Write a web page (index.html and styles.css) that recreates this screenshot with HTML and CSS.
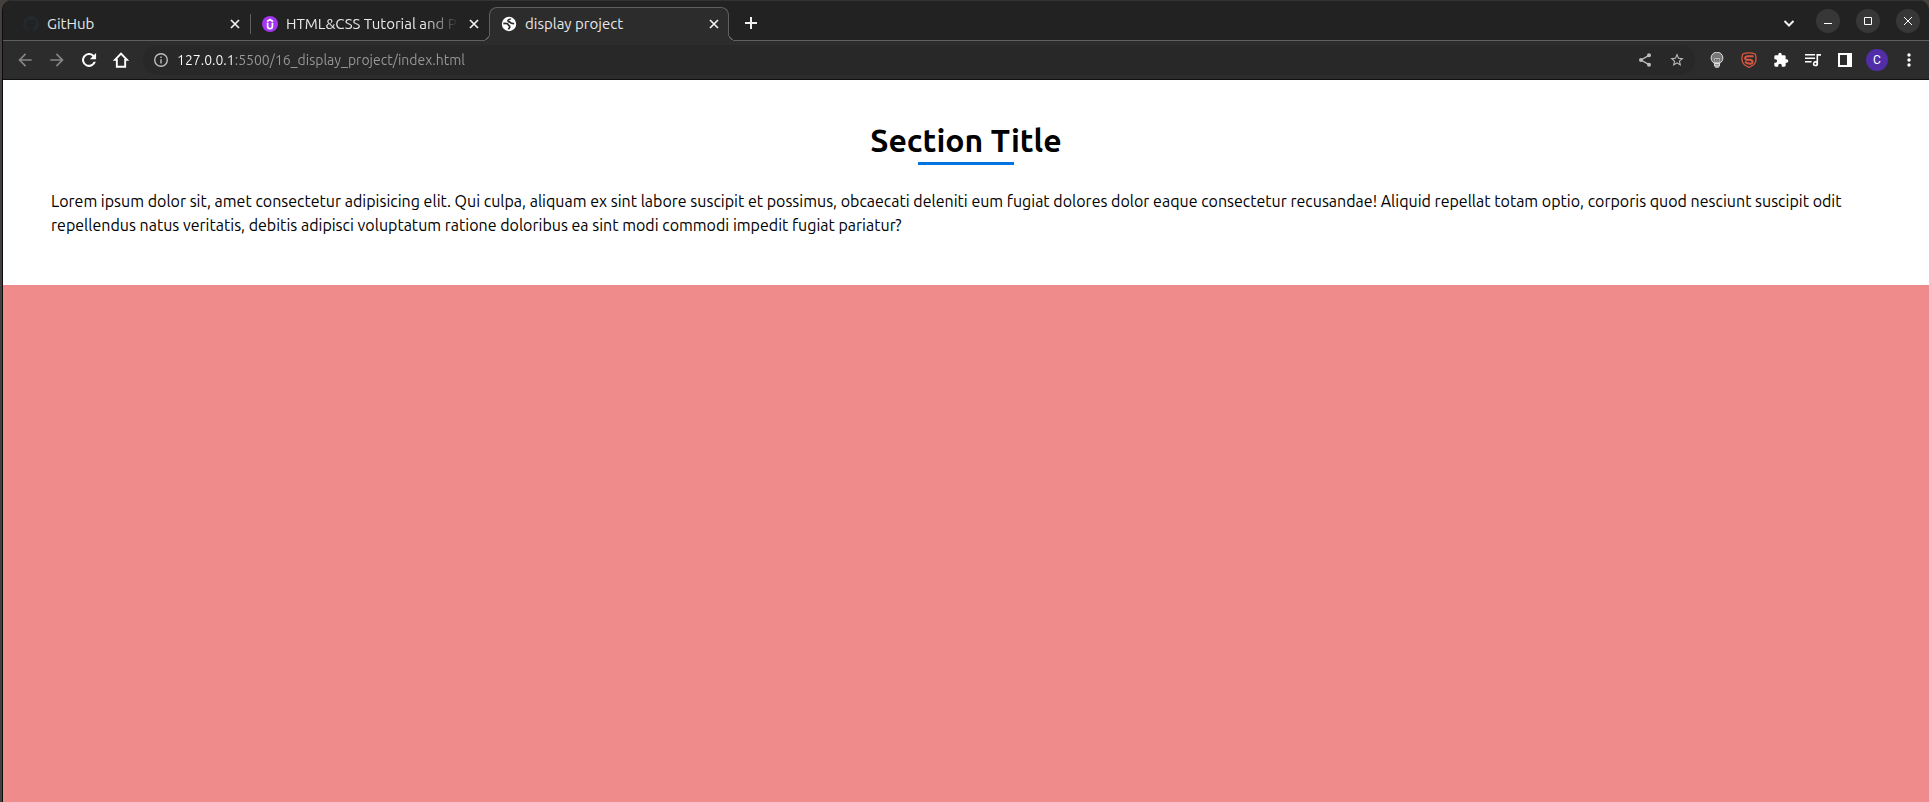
FILE: index.html
```html
<!DOCTYPE html>
<html lang="en">
<head>
<meta charset="utf-8">
<title>display project</title>
<link rel="stylesheet" href="styles.css">
</head>
<body>
<div class="window">
  <header class="tabstrip">
    <nav class="tabs" aria-label="Tabs">
      <div class="tab">
        <svg class="favicon" viewBox="0 0 16 16" fill="#24292f"><path d="M8 0a8 8 0 0 0-2.5 15.6c.4.1.5-.2.5-.4v-1.5c-2 .4-2.6-.5-2.800-1-.1-.2-.5-.9-.8-1.100-.3-.2-.7-.5 0-.5s1.100.6 1.200.800c.7 1.200 1.900.900 2.300.700.1-.5.3-.9.500-1.100-1.800-.2-3.600-.9-3.600-4 0-.8.3-1.600.800-2.100-.1-.2-.4-1 .1-2.100 0 0 .7-.2 2.200.800a7.500 7.500 0 0 1 4 0c1.500-1 2.200-.8 2.200-.8.4 1.100.2 1.900.1 2.100.5.600.8 1.300.8 2.100 0 3.100-1.900 3.800-3.600 4 .3.200.5.700.5 1.500v2.200c0 .2.100.5.600.4A8 8 0 0 0 8 0z"/></svg>
        <span class="tab-title">GitHub</span>
        <button class="tab-close" aria-label="Close GitHub"><svg viewBox="0 0 16 16"><path d="M4 4l8 8M12 4l-8 8"/></svg></button>
      </div>
      <div class="tab tab-divided">
        <svg class="favicon" viewBox="0 0 16 16"><circle cx="8" cy="8" r="8" fill="#a435f0"/><path d="M5.600 6.800v3.400a2.400 2.400 0 0 0 4.800 0V6.800M5 5.400L8 3.600l3 1.800" fill="none" stroke="#fff" stroke-width="1.700"/></svg>
        <span class="tab-title tab-title-faded">HTML&amp;CSS Tutorial and P</span>
        <button class="tab-close" aria-label="Close tutorial"><svg viewBox="0 0 16 16"><path d="M4 4l8 8M12 4l-8 8"/></svg></button>
      </div>
      <div class="tab tab-active">
        <svg class="favicon" viewBox="0 0 16 16"><circle cx="8" cy="8" r="7.200" fill="#fff"/><path d="M2.300 7.600c2.200-.4 4.600-.2 5 1.200.3 1.200 1.500.9 1.500 2.100 0 1-1.100 1-1.200 2.600M9.500 2.500c.1 1.300-2.500.8-2.600 2.200 0 1.300 1.600.9 2.300 1.700.7.900 1.600 1.300 4 1.100" fill="none" stroke="#2c2c2c" stroke-width="1.700"/></svg>
        <span class="tab-title">display project</span>
        <button class="tab-close" aria-label="Close display project"><svg viewBox="0 0 16 16"><path d="M4 4l8 8M12 4l-8 8"/></svg></button>
      </div>
      <button class="new-tab" aria-label="New tab"><svg viewBox="0 0 16 16"><path d="M8 2v12M2 8h12"/></svg></button>
    </nav>
    <div class="window-controls">
      <button class="tab-search" aria-label="Search tabs"><svg viewBox="0 0 16 16"><path d="M3.500 5L8 9.500 12.500 5"/></svg></button>
      <button class="window-button" aria-label="Minimize"><svg viewBox="0 0 24 24"><path d="M8 14.500h8"/></svg></button>
      <button class="window-button" aria-label="Maximize"><svg viewBox="0 0 24 24"><path d="M8.500 8.500h7v7h-7z"/></svg></button>
      <button class="window-button" aria-label="Close window"><svg viewBox="0 0 24 24"><path d="M8 8l8 8M16 8l-8 8"/></svg></button>
    </div>
  </header>
  <div class="toolbar">
    <button class="tool nav dim" aria-label="Back"><svg viewBox="0 0 24 24"><path d="M20 11H7.800l5.600-5.600L12 4l-8 8 8 8 1.400-1.400L7.800 13H20z"/></svg></button>
    <button class="tool nav dim" aria-label="Forward"><svg viewBox="0 0 24 24"><path d="M4 11h12.200l-5.600-5.600L12 4l8 8-8 8-1.400-1.400 5.600-5.600H4z"/></svg></button>
    <button class="tool nav" aria-label="Reload"><svg viewBox="0 0 24 24"><path d="M18 6A8.400 8.400 0 1 0 20.200 14h-2.700A5.900 5.900 0 1 1 16.200 7.800L13 11h7.500V3.500z"/></svg></button>
    <button class="tool nav" aria-label="Home"><svg viewBox="0 0 24 24"><path d="M12 4.300L4.800 11.800H7V20h10v-8.200h2.200z" fill="none" stroke="#fff" stroke-width="2.300"/></svg></button>
    <div class="omnibox">
      <button class="tool muted" aria-label="Site information"><svg viewBox="0 0 24 24"><path d="M11 7h2v2h-2zm0 4h2v6h-2zm1-9a10 10 0 1 0 0 20 10 10 0 0 0 0-20zm0 18a8 8 0 1 1 0-16 8 8 0 0 1 0 16z" transform="translate(-.6 -.6) scale(1.050)"/></svg></button>
      <input class="url" type="text" aria-label="Address" value="127.0.0.1:5500/16_display_project/index.html">
      <button class="tool muted" aria-label="Share"><svg viewBox="0 0 24 24"><path d="M18 5L6 12l12 7" fill="none" stroke="#bdbdbd" stroke-width="2"/><circle cx="18" cy="5" r="3"/><circle cx="6" cy="12" r="3"/><circle cx="18" cy="19" r="3"/></svg></button>
      <button class="tool muted" aria-label="Bookmark"><svg viewBox="0 0 24 24"><path d="M22 9.240l-7.190-.62L12 2 9.190 8.630 2 9.240l5.460 4.730L5.820 21 12 17.270 18.180 21l-1.630-7.030zM12 15.400l-3.760 2.270 1-4.280-3.320-2.880 4.380-.38L12 6.100l1.710 4.040 4.380.38-3.320 2.880 1 4.280z"/></svg></button>
    </div>
    <div class="extensions">
      <button class="tool" aria-label="Lightbulb"><svg viewBox="0 0 16 16"><circle cx="8" cy="6" r="5.900" fill="#777" stroke="#ddd"/><path d="M5.500 6.500h5L9.800 11H6.200z" fill="#555" stroke="#ccc" stroke-width=".8"/><path d="M8 6v5" stroke="#ccc" stroke-width=".8"/><path d="M5 10.500h6v3L9.500 15.800h-3L5 13.500z" fill="#ddd"/><path d="M6 12.500h4M6 14h4" stroke="#777" stroke-width=".7"/></svg></button>
      <button class="tool" aria-label="Shield"><svg viewBox="0 0 16 16"><path d="M8 .8c2.500 0 4.700.4 6.200 1.200.8 2 1 5.300.4 7.700-.6 2.300-3.600 4.500-6.600 5.600-3-1.100-6-3.300-6.600-5.600C.8 7.300 1 4 1.800 2 3.300 1.200 5.500.8 8 .8z" fill="none" stroke="#d8573f" stroke-width="1.300"/><path d="M12.500 4.300H6.700c-3.300 0-3.300 3.400-.7 3.500l3.700.3c2.600.2 2.300 3.600-.3 3.600-2.400 0-4-.6-5.400-1.900" fill="none" stroke="#d8573f" stroke-width="2"/></svg></button>
      <button class="tool" aria-label="Extensions"><svg viewBox="0 0 24 24"><path d="M20.500 11H19V7a2 2 0 0 0-2-2h-4V3.500a2.500 2.500 0 0 0-5 0V5H4a2 2 0 0 0-2 2v3.800h1.500a2.700 2.700 0 0 1 0 5.400H2V20a2 2 0 0 0 2 2h3.800v-1.500a2.700 2.700 0 0 1 5.400 0V22H17a2 2 0 0 0 2-2v-4h1.500a2.500 2.500 0 0 0 0-5z"/></svg></button>
      <button class="tool" aria-label="Media"><svg viewBox="0 0 16 16"><path d="M0 2h10v1.500H0zM0 5.500h10V7H0zM0 9h6.500v1.500H0zM11.500 2H16v1.700h-2.900v8a2.600 2.600 0 1 1-1.600-2.400zM10.400 10.700a1 1 0 1 0 0 2 1 1 0 0 0 0-2z" fill-rule="evenodd"/></svg></button>
      <button class="tool" aria-label="Side panel"><svg viewBox="0 0 16 16"><path d="M1 1h14v14H1zM3 3v10h7V3z" fill-rule="evenodd"/></svg></button>
      <button class="tool avatar" aria-label="Profile">C</button>
      <button class="tool" aria-label="Menu"><svg viewBox="0 0 16 16"><circle cx="8" cy="3" r="1.700"/><circle cx="8" cy="8" r="1.700"/><circle cx="8" cy="13" r="1.700"/></svg></button>
    </div>
  </div>
  <main class="page">
    <section class="intro">
      <h2 class="section-title">Section Title</h2>
      <p class="text">Lorem ipsum dolor sit, amet consectetur adipisicing elit. Qui culpa, aliquam ex sint labore suscipit et possimus, obcaecati deleniti eum fugiat dolores dolor eaque consectetur recusandae! Aliquid repellat totam optio, corporis quod nesciunt suscipit odit repellendus natus veritatis, debitis adipisci voluptatum ratione doloribus ea sint modi commodi impedit fugiat pariatur?</p>
    </section>
    <section class="panel"></section>
  </main>
</div>
</body>
</html>
```
FILE: styles.css
```css
* {
  box-sizing: border-box;
}

body {
  margin: 0;
  background: #453f3d;
  font-family: Ubuntu, "Noto Sans", "Open Sans", sans-serif;
}

button {
  display: flex;
  align-items: center;
  justify-content: center;
  flex: none;
  padding: 0;
  border: 0;
  background: none;
  color: inherit;
  font: inherit;
}

svg {
  display: block;
}

.window {
  display: flex;
  flex-direction: column;
  min-height: 100vh;
  margin-left: 2px;
  border-left: 1px solid #0c0c0c;
  border-radius: 10px 10px 0 0;
  overflow: hidden;
}

.tabstrip {
  display: flex;
  justify-content: space-between;
  height: 41px;
  border-top: 1px solid #333;
  background: linear-gradient(#5f5f5f, #5f5f5f) bottom / 100% 1px no-repeat #222;
  color: #e8e8e8;
}

.tabs {
  display: flex;
  align-items: flex-end;
  padding-left: 8px;
}

.tab {
  position: relative;
  display: flex;
  align-items: center;
  gap: 8px;
  width: 239px;
  height: 34px;
  padding: 0 6px 2px 11px;
  border: 1px solid transparent;
  border-bottom: 0;
  font-size: 15px;
}

.tab-divided::before {
  content: "";
  position: absolute;
  left: -1px;
  top: 6px;
  width: 1px;
  height: 20px;
  background: #5f5f5f;
}

.tab-active {
  width: 240px;
  border-color: #5f5f5f;
  border-radius: 8px 8px 0 0;
  background: #2c2c2c;
}

.tab-active::before,
.tab-active::after {
  content: "";
  position: absolute;
  bottom: 0;
  width: 8px;
  height: 8px;
}

.tab-active::before {
  right: 100%;
  background: radial-gradient(circle at 0 0, #222 7px, #5f5f5f 7px, #5f5f5f 8px, #2c2c2c 8px);
}

.tab-active::after {
  left: 100%;
  background: radial-gradient(circle at 100% 0, #222 7px, #5f5f5f 7px, #5f5f5f 8px, #2c2c2c 8px);
}

.favicon {
  flex: none;
  width: 16px;
  height: 16px;
}

.tab-title {
  flex: 1;
  white-space: nowrap;
}

.tab-title-faded {
  mask-image: linear-gradient(to right, #000 calc(100% - 32px), transparent);
}

.tab-close,
.tab-close svg,
.new-tab svg,
.tab-search,
.tab-search svg {
  width: 16px;
  height: 16px;
}

.tab-close svg,
.new-tab svg,
.tab-search svg {
  fill: none;
  stroke: #f1f1f1;
  stroke-width: 2;
}

.tab-close svg {
  stroke-width: 1.700;
}

.new-tab {
  width: 32px;
  height: 34px;
  margin-left: 6px;
  padding-bottom: 2px;
}

.window-controls {
  display: flex;
  align-items: center;
  gap: 16px;
  padding: 0 9px 0 0;
}

.tab-search {
  margin: 6px 3px 0 0;
}

.window-button {
  width: 24px;
  height: 24px;
  border-radius: 50%;
  background: #373737;
}

.window-button svg {
  width: 24px;
  height: 24px;
  fill: none;
  stroke: #fff;
}

.toolbar {
  display: flex;
  align-items: center;
  height: 39px;
  padding: 0 4px 0 6px;
  border-bottom: 1px solid #111;
  background: #2c2c2c;
  color: #fff;
}

.tool {
  width: 32px;
  height: 30px;
}

.tool svg {
  width: 16px;
  height: 16px;
  fill: currentColor;
}

.nav svg {
  width: 20px;
  height: 20px;
}

.dim {
  color: #858585;
}

.muted {
  color: #bdbdbd;
}

.omnibox {
  display: flex;
  align-items: center;
  flex: 1;
  height: 30px;
  margin: 0 6px;
  padding: 0 2px;
  border-radius: 15px;
  background: #282828;
}

.url {
  flex: 1;
  min-width: 0;
  padding: 0;
  border: 0;
  outline: 0;
  background: linear-gradient(to right, #fff 56px, #999 56px);
  background-clip: text;
  color: transparent;
  font: inherit;
  font-size: 14px;
}

.extensions {
  display: flex;
  align-items: center;
}

.avatar {
  width: 22px;
  height: 22px;
  margin: 0 5px;
  border-radius: 50%;
  background: #512da8;
  font-family: Roboto, sans-serif;
  font-size: 12px;
}

.page {
  display: flex;
  flex: 1;
  flex-direction: column;
  background: #fff;
  color: #000;
}

.intro {
  padding: 38px 48px 48px;
}

.section-title {
  margin: 0 0 24px;
  font-size: 32px;
  line-height: 44px;
  text-align: center;
}

.section-title::after {
  content: "";
  display: block;
  width: 96px;
  height: 3px;
  margin: 0 auto;
  background: #0074e0;
}

.text {
  margin: 0;
  font-size: 16px;
  line-height: 24px;
}

.panel {
  flex: 1;
  background: #ef8b8a;
}
```
